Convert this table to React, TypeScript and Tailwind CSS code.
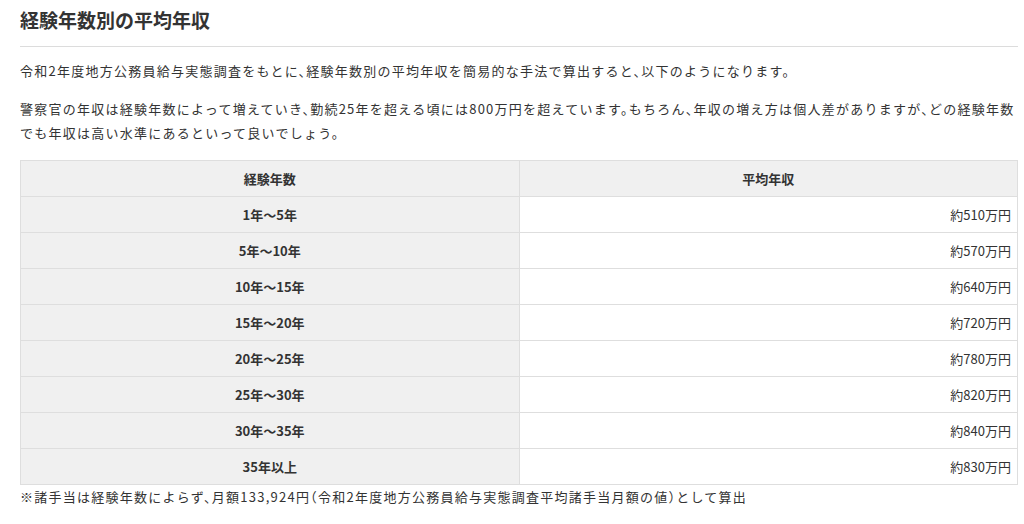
import React from "react";

const rows: [string, string][] = [
  ["1年〜5年", "約510万円"],
  ["5年〜10年", "約570万円"],
  ["10年〜15年", "約640万円"],
  ["15年〜20年", "約720万円"],
  ["20年〜25年", "約780万円"],
  ["25年〜30年", "約820万円"],
  ["30年〜35年", "約840万円"],
  ["35年以上", "約830万円"],
];

export default function App() {
  return (
    <div
      className="w-[1024px] h-[524px] bg-white text-[#333] pl-[20px] pr-[6px] pt-[7px] overflow-hidden [font-feature-settings:'halt']"
      style={{ fontFamily: '"Noto Sans CJK JP", "Noto Sans", sans-serif' }}
    >
      <h2 className="text-[19px] font-bold leading-[26px] text-[#333]">経験年数別の平均年収</h2>
      <div className="mt-[13px] h-px bg-[#dcdcdc]" />
      <p className="mt-[12px] text-[13px] leading-[24px] tracking-[1.25px]">
        令和2年度地方公務員給与実態調査をもとに、経験年数別の平均年収を簡易的な手法で算出すると、以下のようになります。
      </p>
      <p className="mt-[14px] text-[13px] leading-[24px] tracking-[1.25px]">
        警察官の年収は経験年数によって増えていき、勤続25年を超える頃には800万円を超えています。もちろん、年収の増え方は個人差がありますが、どの経験年数でも年収は高い水準にあるといって良いでしょう。
      </p>
      <table className="mt-[15px] w-[998px] border-collapse text-[13px] table-fixed">
        <thead>
          <tr className="h-[36px] bg-[#f0f0f0]">
            <th className="w-1/2 border border-[#dedede] font-bold text-center">経験年数</th>
            <th className="w-1/2 border border-[#dedede] font-bold text-center">平均年収</th>
          </tr>
        </thead>
        <tbody>
          {rows.map(([a, b]) => (
            <tr key={a} className="h-[36px]">
              <td className="border border-[#dedede] bg-[#f0f0f0] font-bold text-center">{a}</td>
              <td className="border border-[#dedede] bg-white text-right pr-[6px]">{b}</td>
            </tr>
          ))}
        </tbody>
      </table>
      <p className="mt-[1px] text-[13px] leading-[22px] tracking-[1.25px]">
        ※諸手当は経験年数によらず、月額133,924円（令和2年度地方公務員給与実態調査平均諸手当月額の値）として算出
      </p>
    </div>
  );
}
